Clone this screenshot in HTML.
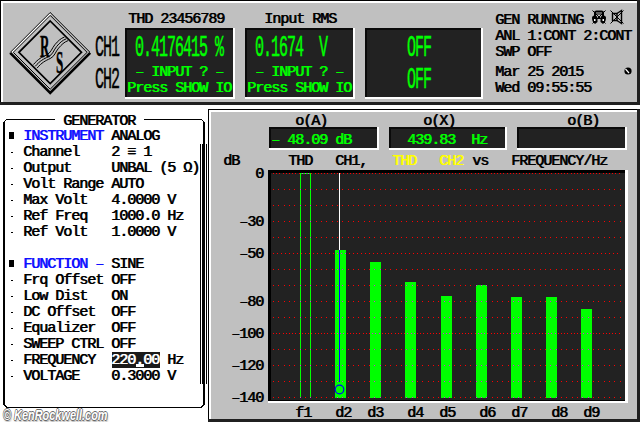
<!DOCTYPE html>
<html><head><meta charset="utf-8"><style>
html,body{margin:0;padding:0;background:#fff;width:640px;height:422px;overflow:hidden;position:relative}
.r{position:absolute}
.t{position:absolute;white-space:pre;font:15px/16px "Liberation Mono",monospace;letter-spacing:-1px;text-shadow:0.8px 0 0 currentColor}
.big{position:absolute;white-space:pre;font:15px/16px "Liberation Mono",monospace;letter-spacing:-1px;transform:scaleY(2);transform-origin:0 0;-webkit-text-stroke:0.25px currentColor}
.logo{position:absolute;font:bold 31px/31px "Liberation Serif",serif;transform:scaleX(0.42);transform-origin:0 0;color:#000;-webkit-text-stroke:0.5px #000}
.wm{position:absolute;white-space:pre;font:italic bold 14px/16px "Liberation Sans",sans-serif;color:#fff;transform:scaleX(0.78);transform-origin:0 0;text-shadow:-0.8px 0 0.6px #666,0.8px 0 0.6px #666,0 -0.8px 0.6px #666,0 0.8px 0.6px #666,1px 2px 2px #999}
</style></head><body>
<div class="r" style="left:0px;top:0px;width:640px;height:105px;background:#000;"></div>
<div class="r" style="left:1px;top:1px;width:636px;height:101px;background:#fff;"></div>
<div class="r" style="left:3px;top:3px;width:634px;height:99px;background:#c0c0c0;"></div>
<div class="r" style="left:637px;top:0px;width:3px;height:105px;background:#202020;"></div>
<div class="r" style="left:0px;top:102px;width:640px;height:3px;background:#202020;"></div>
<div class="r" style="left:125px;top:28px;width:110px;height:71px;background:#fff;"></div>
<div class="r" style="left:125px;top:28px;width:108px;height:69px;background:#0a0a0a;"></div>
<div class="r" style="left:127px;top:30px;width:106px;height:67px;background:#222222;"></div>
<div class="r" style="left:245px;top:28px;width:110px;height:71px;background:#fff;"></div>
<div class="r" style="left:245px;top:28px;width:108px;height:69px;background:#0a0a0a;"></div>
<div class="r" style="left:247px;top:30px;width:106px;height:67px;background:#222222;"></div>
<div class="r" style="left:365px;top:28px;width:118px;height:71px;background:#fff;"></div>
<div class="r" style="left:365px;top:28px;width:116px;height:69px;background:#0a0a0a;"></div>
<div class="r" style="left:367px;top:30px;width:114px;height:67px;background:#222222;"></div>
<div class="t" style="left:128px;top:12px;color:#000;">THD 23456789</div>
<div class="t" style="left:264px;top:12px;color:#000;">Input RMS</div>
<div class="big" style="left:95px;top:34px;color:#000;">CH1</div>
<div class="big" style="left:95px;top:66px;color:#000;">CH2</div>
<div class="big" style="left:135px;top:34px;color:#00ff00;">0.4176415 %</div>
<div class="t" style="left:127px;top:65px;color:#00ff00;"> – INPUT ? –</div>
<div class="t" style="left:127px;top:81px;color:#00ff00;">Press SHOW IO</div>
<div class="big" style="left:255px;top:34px;color:#00ff00;">0.1674  V</div>
<div class="t" style="left:247px;top:65px;color:#00ff00;"> – INPUT ? –</div>
<div class="t" style="left:247px;top:81px;color:#00ff00;">Press SHOW IO</div>
<div class="big" style="left:407px;top:34px;color:#00ff00;">OFF</div>
<div class="big" style="left:407px;top:66px;color:#00ff00;">OFF</div>
<div class="t" style="left:495px;top:13px;color:#000;">GEN RUNNING</div>
<div class="t" style="left:495px;top:29px;color:#000;">ANL 1:CONT 2:CONT</div>
<div class="t" style="left:495px;top:45px;color:#000;">SWP OFF</div>
<div class="t" style="left:495px;top:65px;color:#000;">Mar 25 2015</div>
<div class="t" style="left:495px;top:81px;color:#000;">Wed 09:55:55</div>
<div class="r" style="left:6px;top:119px;width:49px;height:1px;background:#000;"></div>
<div class="r" style="left:144px;top:119px;width:58px;height:1px;background:#000;"></div>
<div class="r" style="left:5px;top:120px;width:1px;height:1px;background:#000;"></div>
<div class="r" style="left:4px;top:121px;width:1px;height:1px;background:#000;"></div>
<div class="r" style="left:202px;top:120px;width:1px;height:1px;background:#000;"></div>
<div class="r" style="left:203px;top:121px;width:1px;height:1px;background:#000;"></div>
<div class="r" style="left:3px;top:122px;width:2px;height:283px;background:#000;"></div>
<div class="r" style="left:203px;top:122px;width:2px;height:283px;background:#000;"></div>
<div class="r" style="left:4px;top:405px;width:2px;height:1px;background:#000;"></div>
<div class="r" style="left:5px;top:406px;width:2px;height:1px;background:#000;"></div>
<div class="r" style="left:6px;top:407px;width:196px;height:1px;background:#000;"></div>
<div class="r" style="left:202px;top:405px;width:2px;height:1px;background:#000;"></div>
<div class="r" style="left:201px;top:406px;width:2px;height:1px;background:#000;"></div>
<div class="t" style="left:63px;top:114px;color:#000;">GENERATOR</div>
<div class="r" style="left:9px;top:132px;width:5px;height:7px;background:#000;"></div>
<div class="t" style="left:23px;top:129px;color:#1010ff;">INSTRUMENT</div>
<div class="t" style="left:111px;top:129px;color:#000;">ANALOG</div>
<div class="r" style="left:11px;top:152px;width:2px;height:1px;background:#000;"></div>
<div class="t" style="left:23px;top:145px;color:#000;">Channel</div>
<div class="t" style="left:111px;top:145px;color:#000;">2 ≡ 1</div>
<div class="r" style="left:11px;top:168px;width:2px;height:1px;background:#000;"></div>
<div class="t" style="left:23px;top:161px;color:#000;">Output</div>
<div class="t" style="left:111px;top:161px;color:#000;">UNBAL (5 Ω)</div>
<div class="r" style="left:11px;top:184px;width:2px;height:1px;background:#000;"></div>
<div class="t" style="left:23px;top:177px;color:#000;">Volt Range</div>
<div class="t" style="left:111px;top:177px;color:#000;">AUTO</div>
<div class="r" style="left:11px;top:200px;width:2px;height:1px;background:#000;"></div>
<div class="t" style="left:23px;top:193px;color:#000;">Max Volt</div>
<div class="t" style="left:111px;top:193px;color:#000;">4.0000 V</div>
<div class="r" style="left:11px;top:216px;width:2px;height:1px;background:#000;"></div>
<div class="t" style="left:23px;top:209px;color:#000;">Ref Freq</div>
<div class="t" style="left:111px;top:209px;color:#000;">1000.0 Hz</div>
<div class="r" style="left:11px;top:232px;width:2px;height:1px;background:#000;"></div>
<div class="t" style="left:23px;top:225px;color:#000;">Ref Volt</div>
<div class="t" style="left:111px;top:225px;color:#000;">1.0000 V</div>
<div class="r" style="left:9px;top:260px;width:5px;height:7px;background:#000;"></div>
<div class="t" style="left:23px;top:257px;color:#1010ff;">FUNCTION –</div>
<div class="t" style="left:111px;top:257px;color:#000;">SINE</div>
<div class="r" style="left:11px;top:280px;width:2px;height:1px;background:#000;"></div>
<div class="t" style="left:23px;top:273px;color:#000;">Frq Offset</div>
<div class="t" style="left:111px;top:273px;color:#000;">OFF</div>
<div class="r" style="left:11px;top:296px;width:2px;height:1px;background:#000;"></div>
<div class="t" style="left:23px;top:289px;color:#000;">Low Dist</div>
<div class="t" style="left:111px;top:289px;color:#000;">ON</div>
<div class="r" style="left:11px;top:312px;width:2px;height:1px;background:#000;"></div>
<div class="t" style="left:23px;top:305px;color:#000;">DC Offset</div>
<div class="t" style="left:111px;top:305px;color:#000;">OFF</div>
<div class="r" style="left:11px;top:328px;width:2px;height:1px;background:#000;"></div>
<div class="t" style="left:23px;top:321px;color:#000;">Equalizer</div>
<div class="t" style="left:111px;top:321px;color:#000;">OFF</div>
<div class="r" style="left:11px;top:344px;width:2px;height:1px;background:#000;"></div>
<div class="t" style="left:23px;top:337px;color:#000;">SWEEP CTRL</div>
<div class="t" style="left:111px;top:337px;color:#000;">OFF</div>
<div class="r" style="left:11px;top:360px;width:2px;height:1px;background:#000;"></div>
<div class="t" style="left:23px;top:353px;color:#000;">FREQUENCY</div>
<div class="r" style="left:11px;top:376px;width:2px;height:1px;background:#000;"></div>
<div class="t" style="left:23px;top:369px;color:#000;">VOLTAGE</div>
<div class="t" style="left:111px;top:369px;color:#000;">0.3000 V</div>
<div class="r" style="left:112px;top:352px;width:48px;height:16px;background:#1a1a1a;"></div>
<div class="t" style="left:111px;top:353px;color:#fff;">220.00</div>
<div class="r" style="left:136px;top:364px;width:8px;height:3px;background:#fff;"></div>
<div class="t" style="left:167px;top:353px;color:#000;">Hz</div>
<div class="r" style="left:200px;top:144px;width:1px;height:240px;background:#000;"></div>
<div class="r" style="left:202px;top:144px;width:3px;height:240px;background:#000;"></div>
<div class="r" style="left:206px;top:144px;width:1px;height:240px;background:#000;"></div>
<div class="wm" style="left:3px;top:407px">© KenRockwell.com</div>
<div class="r" style="left:208px;top:109px;width:432px;height:313px;background:#000;"></div>
<div class="r" style="left:209px;top:110px;width:431px;height:312px;background:#fff;"></div>
<div class="r" style="left:211px;top:112px;width:426px;height:307px;background:#c0c0c0;"></div>
<div class="r" style="left:637px;top:109px;width:3px;height:313px;background:#202020;"></div>
<div class="r" style="left:208px;top:419px;width:432px;height:3px;background:#202020;"></div>
<div class="t" style="left:295px;top:114px;color:#000;">o(A)</div>
<div class="t" style="left:423px;top:114px;color:#000;">o(X)</div>
<div class="t" style="left:567px;top:114px;color:#000;">o(B)</div>
<div class="r" style="left:269px;top:127px;width:110px;height:23px;background:#fff;"></div>
<div class="r" style="left:269px;top:127px;width:108px;height:21px;background:#0a0a0a;"></div>
<div class="r" style="left:271px;top:129px;width:106px;height:19px;background:#222222;"></div>
<div class="r" style="left:389px;top:127px;width:118px;height:23px;background:#fff;"></div>
<div class="r" style="left:389px;top:127px;width:116px;height:21px;background:#0a0a0a;"></div>
<div class="r" style="left:391px;top:129px;width:114px;height:19px;background:#222222;"></div>
<div class="r" style="left:517px;top:127px;width:110px;height:23px;background:#fff;"></div>
<div class="r" style="left:517px;top:127px;width:108px;height:21px;background:#0a0a0a;"></div>
<div class="r" style="left:519px;top:129px;width:106px;height:19px;background:#222222;"></div>
<div class="t" style="left:271px;top:133px;color:#00ff00;">– 48.09 dB</div>
<div class="t" style="left:407px;top:133px;color:#00ff00;">439.83  Hz</div>
<div class="t" style="left:223px;top:154px;color:#000;">dB</div>
<div class="t" style="left:288px;top:154px;color:#000;">THD</div>
<div class="t" style="left:335px;top:154px;color:#000;">CH1,</div>
<div class="t" style="left:392px;top:154px;color:#ffff00;">THD</div>
<div class="t" style="left:439px;top:154px;color:#ffff00;">CH2</div>
<div class="t" style="left:472px;top:154px;color:#000;">vs</div>
<div class="t" style="left:511px;top:154px;color:#000;">FREQUENCY/Hz</div>
<div class="r" style="left:268px;top:170px;width:360px;height:233px;background:#fff;"></div>
<div class="r" style="left:268px;top:170px;width:357px;height:231px;background:#000;"></div>
<div class="r" style="left:271px;top:173px;width:354px;height:227px;background:#222222;"></div>
<svg class="r" style="left:0;top:0" width="640" height="422" shape-rendering="crispEdges">
<rect x="335" y="250" width="11" height="148" fill="#00ff00"/>
<rect x="370" y="262" width="11" height="136" fill="#00ff00"/>
<rect x="405" y="282" width="11" height="116" fill="#00ff00"/>
<rect x="441" y="296" width="11" height="102" fill="#00ff00"/>
<rect x="476" y="285" width="11" height="113" fill="#00ff00"/>
<rect x="511" y="297" width="11" height="101" fill="#00ff00"/>
<rect x="546" y="297" width="11" height="101" fill="#00ff00"/>
<rect x="581" y="309" width="11" height="89" fill="#00ff00"/>
<rect x="300" y="173" width="1" height="225" fill="#00ff00"/>
<rect x="310" y="173" width="1" height="225" fill="#00ff00"/>
<rect x="300" y="173" width="11" height="1" fill="#00ff00"/>
<rect x="273" y="173" width="1" height="1" fill="#ff0000"/>
<rect x="276" y="173" width="1" height="1" fill="#ff0000"/>
<rect x="279" y="173" width="1" height="1" fill="#ff0000"/>
<rect x="283" y="173" width="1" height="1" fill="#ff0000"/>
<rect x="286" y="173" width="1" height="1" fill="#ff0000"/>
<rect x="289" y="173" width="1" height="1" fill="#ff0000"/>
<rect x="292" y="173" width="1" height="1" fill="#ff0000"/>
<rect x="295" y="173" width="1" height="1" fill="#ff0000"/>
<rect x="299" y="173" width="1" height="1" fill="#ff0000"/>
<rect x="302" y="173" width="1" height="1" fill="#e020e0"/>
<rect x="305" y="173" width="1" height="1" fill="#e020e0"/>
<rect x="308" y="173" width="1" height="1" fill="#e020e0"/>
<rect x="311" y="173" width="1" height="1" fill="#ff0000"/>
<rect x="315" y="173" width="1" height="1" fill="#ff0000"/>
<rect x="318" y="173" width="1" height="1" fill="#ff0000"/>
<rect x="321" y="173" width="1" height="1" fill="#ff0000"/>
<rect x="324" y="173" width="1" height="1" fill="#ff0000"/>
<rect x="327" y="173" width="1" height="1" fill="#ff0000"/>
<rect x="331" y="173" width="1" height="1" fill="#ff0000"/>
<rect x="334" y="173" width="1" height="1" fill="#ff0000"/>
<rect x="337" y="173" width="1" height="1" fill="#ff0000"/>
<rect x="340" y="173" width="1" height="1" fill="#ff0000"/>
<rect x="343" y="173" width="1" height="1" fill="#ff0000"/>
<rect x="347" y="173" width="1" height="1" fill="#ff0000"/>
<rect x="350" y="173" width="1" height="1" fill="#ff0000"/>
<rect x="353" y="173" width="1" height="1" fill="#ff0000"/>
<rect x="356" y="173" width="1" height="1" fill="#ff0000"/>
<rect x="359" y="173" width="1" height="1" fill="#ff0000"/>
<rect x="363" y="173" width="1" height="1" fill="#ff0000"/>
<rect x="366" y="173" width="1" height="1" fill="#ff0000"/>
<rect x="369" y="173" width="1" height="1" fill="#ff0000"/>
<rect x="372" y="173" width="1" height="1" fill="#ff0000"/>
<rect x="375" y="173" width="1" height="1" fill="#ff0000"/>
<rect x="379" y="173" width="1" height="1" fill="#ff0000"/>
<rect x="382" y="173" width="1" height="1" fill="#ff0000"/>
<rect x="385" y="173" width="1" height="1" fill="#ff0000"/>
<rect x="388" y="173" width="1" height="1" fill="#ff0000"/>
<rect x="391" y="173" width="1" height="1" fill="#ff0000"/>
<rect x="395" y="173" width="1" height="1" fill="#ff0000"/>
<rect x="398" y="173" width="1" height="1" fill="#ff0000"/>
<rect x="401" y="173" width="1" height="1" fill="#ff0000"/>
<rect x="404" y="173" width="1" height="1" fill="#ff0000"/>
<rect x="407" y="173" width="1" height="1" fill="#ff0000"/>
<rect x="411" y="173" width="1" height="1" fill="#ff0000"/>
<rect x="414" y="173" width="1" height="1" fill="#ff0000"/>
<rect x="417" y="173" width="1" height="1" fill="#ff0000"/>
<rect x="420" y="173" width="1" height="1" fill="#ff0000"/>
<rect x="423" y="173" width="1" height="1" fill="#ff0000"/>
<rect x="427" y="173" width="1" height="1" fill="#ff0000"/>
<rect x="430" y="173" width="1" height="1" fill="#ff0000"/>
<rect x="433" y="173" width="1" height="1" fill="#ff0000"/>
<rect x="436" y="173" width="1" height="1" fill="#ff0000"/>
<rect x="439" y="173" width="1" height="1" fill="#ff0000"/>
<rect x="443" y="173" width="1" height="1" fill="#ff0000"/>
<rect x="446" y="173" width="1" height="1" fill="#ff0000"/>
<rect x="449" y="173" width="1" height="1" fill="#ff0000"/>
<rect x="452" y="173" width="1" height="1" fill="#ff0000"/>
<rect x="455" y="173" width="1" height="1" fill="#ff0000"/>
<rect x="459" y="173" width="1" height="1" fill="#ff0000"/>
<rect x="462" y="173" width="1" height="1" fill="#ff0000"/>
<rect x="465" y="173" width="1" height="1" fill="#ff0000"/>
<rect x="468" y="173" width="1" height="1" fill="#ff0000"/>
<rect x="471" y="173" width="1" height="1" fill="#ff0000"/>
<rect x="475" y="173" width="1" height="1" fill="#ff0000"/>
<rect x="478" y="173" width="1" height="1" fill="#ff0000"/>
<rect x="481" y="173" width="1" height="1" fill="#ff0000"/>
<rect x="484" y="173" width="1" height="1" fill="#ff0000"/>
<rect x="487" y="173" width="1" height="1" fill="#ff0000"/>
<rect x="491" y="173" width="1" height="1" fill="#ff0000"/>
<rect x="494" y="173" width="1" height="1" fill="#ff0000"/>
<rect x="497" y="173" width="1" height="1" fill="#ff0000"/>
<rect x="500" y="173" width="1" height="1" fill="#ff0000"/>
<rect x="503" y="173" width="1" height="1" fill="#ff0000"/>
<rect x="507" y="173" width="1" height="1" fill="#ff0000"/>
<rect x="510" y="173" width="1" height="1" fill="#ff0000"/>
<rect x="513" y="173" width="1" height="1" fill="#ff0000"/>
<rect x="516" y="173" width="1" height="1" fill="#ff0000"/>
<rect x="519" y="173" width="1" height="1" fill="#ff0000"/>
<rect x="523" y="173" width="1" height="1" fill="#ff0000"/>
<rect x="526" y="173" width="1" height="1" fill="#ff0000"/>
<rect x="529" y="173" width="1" height="1" fill="#ff0000"/>
<rect x="532" y="173" width="1" height="1" fill="#ff0000"/>
<rect x="535" y="173" width="1" height="1" fill="#ff0000"/>
<rect x="539" y="173" width="1" height="1" fill="#ff0000"/>
<rect x="542" y="173" width="1" height="1" fill="#ff0000"/>
<rect x="545" y="173" width="1" height="1" fill="#ff0000"/>
<rect x="548" y="173" width="1" height="1" fill="#ff0000"/>
<rect x="551" y="173" width="1" height="1" fill="#ff0000"/>
<rect x="555" y="173" width="1" height="1" fill="#ff0000"/>
<rect x="558" y="173" width="1" height="1" fill="#ff0000"/>
<rect x="561" y="173" width="1" height="1" fill="#ff0000"/>
<rect x="564" y="173" width="1" height="1" fill="#ff0000"/>
<rect x="567" y="173" width="1" height="1" fill="#ff0000"/>
<rect x="571" y="173" width="1" height="1" fill="#ff0000"/>
<rect x="574" y="173" width="1" height="1" fill="#ff0000"/>
<rect x="577" y="173" width="1" height="1" fill="#ff0000"/>
<rect x="580" y="173" width="1" height="1" fill="#ff0000"/>
<rect x="583" y="173" width="1" height="1" fill="#ff0000"/>
<rect x="587" y="173" width="1" height="1" fill="#ff0000"/>
<rect x="590" y="173" width="1" height="1" fill="#ff0000"/>
<rect x="593" y="173" width="1" height="1" fill="#ff0000"/>
<rect x="596" y="173" width="1" height="1" fill="#ff0000"/>
<rect x="599" y="173" width="1" height="1" fill="#ff0000"/>
<rect x="603" y="173" width="1" height="1" fill="#ff0000"/>
<rect x="606" y="173" width="1" height="1" fill="#ff0000"/>
<rect x="609" y="173" width="1" height="1" fill="#ff0000"/>
<rect x="612" y="173" width="1" height="1" fill="#ff0000"/>
<rect x="615" y="173" width="1" height="1" fill="#ff0000"/>
<rect x="619" y="173" width="1" height="1" fill="#ff0000"/>
<rect x="273" y="189" width="1" height="1" fill="#ff0000"/>
<rect x="278" y="189" width="1" height="1" fill="#ff0000"/>
<rect x="284" y="189" width="1" height="1" fill="#ff0000"/>
<rect x="289" y="189" width="1" height="1" fill="#ff0000"/>
<rect x="294" y="189" width="1" height="1" fill="#ff0000"/>
<rect x="300" y="189" width="1" height="1" fill="#e020e0"/>
<rect x="305" y="189" width="1" height="1" fill="#ff0000"/>
<rect x="310" y="189" width="1" height="1" fill="#e020e0"/>
<rect x="316" y="189" width="1" height="1" fill="#ff0000"/>
<rect x="321" y="189" width="1" height="1" fill="#ff0000"/>
<rect x="326" y="189" width="1" height="1" fill="#ff0000"/>
<rect x="332" y="189" width="1" height="1" fill="#ff0000"/>
<rect x="337" y="189" width="1" height="1" fill="#ff0000"/>
<rect x="342" y="189" width="1" height="1" fill="#ff0000"/>
<rect x="348" y="189" width="1" height="1" fill="#ff0000"/>
<rect x="353" y="189" width="1" height="1" fill="#ff0000"/>
<rect x="358" y="189" width="1" height="1" fill="#ff0000"/>
<rect x="364" y="189" width="1" height="1" fill="#ff0000"/>
<rect x="369" y="189" width="1" height="1" fill="#ff0000"/>
<rect x="374" y="189" width="1" height="1" fill="#ff0000"/>
<rect x="380" y="189" width="1" height="1" fill="#ff0000"/>
<rect x="385" y="189" width="1" height="1" fill="#ff0000"/>
<rect x="390" y="189" width="1" height="1" fill="#ff0000"/>
<rect x="396" y="189" width="1" height="1" fill="#ff0000"/>
<rect x="401" y="189" width="1" height="1" fill="#ff0000"/>
<rect x="406" y="189" width="1" height="1" fill="#ff0000"/>
<rect x="412" y="189" width="1" height="1" fill="#ff0000"/>
<rect x="417" y="189" width="1" height="1" fill="#ff0000"/>
<rect x="422" y="189" width="1" height="1" fill="#ff0000"/>
<rect x="428" y="189" width="1" height="1" fill="#ff0000"/>
<rect x="433" y="189" width="1" height="1" fill="#ff0000"/>
<rect x="438" y="189" width="1" height="1" fill="#ff0000"/>
<rect x="444" y="189" width="1" height="1" fill="#ff0000"/>
<rect x="449" y="189" width="1" height="1" fill="#ff0000"/>
<rect x="454" y="189" width="1" height="1" fill="#ff0000"/>
<rect x="460" y="189" width="1" height="1" fill="#ff0000"/>
<rect x="465" y="189" width="1" height="1" fill="#ff0000"/>
<rect x="470" y="189" width="1" height="1" fill="#ff0000"/>
<rect x="476" y="189" width="1" height="1" fill="#ff0000"/>
<rect x="481" y="189" width="1" height="1" fill="#ff0000"/>
<rect x="486" y="189" width="1" height="1" fill="#ff0000"/>
<rect x="492" y="189" width="1" height="1" fill="#ff0000"/>
<rect x="497" y="189" width="1" height="1" fill="#ff0000"/>
<rect x="502" y="189" width="1" height="1" fill="#ff0000"/>
<rect x="508" y="189" width="1" height="1" fill="#ff0000"/>
<rect x="513" y="189" width="1" height="1" fill="#ff0000"/>
<rect x="518" y="189" width="1" height="1" fill="#ff0000"/>
<rect x="524" y="189" width="1" height="1" fill="#ff0000"/>
<rect x="529" y="189" width="1" height="1" fill="#ff0000"/>
<rect x="534" y="189" width="1" height="1" fill="#ff0000"/>
<rect x="540" y="189" width="1" height="1" fill="#ff0000"/>
<rect x="545" y="189" width="1" height="1" fill="#ff0000"/>
<rect x="550" y="189" width="1" height="1" fill="#ff0000"/>
<rect x="556" y="189" width="1" height="1" fill="#ff0000"/>
<rect x="561" y="189" width="1" height="1" fill="#ff0000"/>
<rect x="566" y="189" width="1" height="1" fill="#ff0000"/>
<rect x="572" y="189" width="1" height="1" fill="#ff0000"/>
<rect x="577" y="189" width="1" height="1" fill="#ff0000"/>
<rect x="582" y="189" width="1" height="1" fill="#ff0000"/>
<rect x="588" y="189" width="1" height="1" fill="#ff0000"/>
<rect x="593" y="189" width="1" height="1" fill="#ff0000"/>
<rect x="598" y="189" width="1" height="1" fill="#ff0000"/>
<rect x="604" y="189" width="1" height="1" fill="#ff0000"/>
<rect x="609" y="189" width="1" height="1" fill="#ff0000"/>
<rect x="614" y="189" width="1" height="1" fill="#ff0000"/>
<rect x="620" y="189" width="1" height="1" fill="#ff0000"/>
<rect x="273" y="205" width="1" height="1" fill="#ff0000"/>
<rect x="278" y="205" width="1" height="1" fill="#ff0000"/>
<rect x="284" y="205" width="1" height="1" fill="#ff0000"/>
<rect x="289" y="205" width="1" height="1" fill="#ff0000"/>
<rect x="294" y="205" width="1" height="1" fill="#ff0000"/>
<rect x="300" y="205" width="1" height="1" fill="#e020e0"/>
<rect x="305" y="205" width="1" height="1" fill="#ff0000"/>
<rect x="310" y="205" width="1" height="1" fill="#e020e0"/>
<rect x="316" y="205" width="1" height="1" fill="#ff0000"/>
<rect x="321" y="205" width="1" height="1" fill="#ff0000"/>
<rect x="326" y="205" width="1" height="1" fill="#ff0000"/>
<rect x="332" y="205" width="1" height="1" fill="#ff0000"/>
<rect x="337" y="205" width="1" height="1" fill="#ff0000"/>
<rect x="342" y="205" width="1" height="1" fill="#ff0000"/>
<rect x="348" y="205" width="1" height="1" fill="#ff0000"/>
<rect x="353" y="205" width="1" height="1" fill="#ff0000"/>
<rect x="358" y="205" width="1" height="1" fill="#ff0000"/>
<rect x="364" y="205" width="1" height="1" fill="#ff0000"/>
<rect x="369" y="205" width="1" height="1" fill="#ff0000"/>
<rect x="374" y="205" width="1" height="1" fill="#ff0000"/>
<rect x="380" y="205" width="1" height="1" fill="#ff0000"/>
<rect x="385" y="205" width="1" height="1" fill="#ff0000"/>
<rect x="390" y="205" width="1" height="1" fill="#ff0000"/>
<rect x="396" y="205" width="1" height="1" fill="#ff0000"/>
<rect x="401" y="205" width="1" height="1" fill="#ff0000"/>
<rect x="406" y="205" width="1" height="1" fill="#ff0000"/>
<rect x="412" y="205" width="1" height="1" fill="#ff0000"/>
<rect x="417" y="205" width="1" height="1" fill="#ff0000"/>
<rect x="422" y="205" width="1" height="1" fill="#ff0000"/>
<rect x="428" y="205" width="1" height="1" fill="#ff0000"/>
<rect x="433" y="205" width="1" height="1" fill="#ff0000"/>
<rect x="438" y="205" width="1" height="1" fill="#ff0000"/>
<rect x="444" y="205" width="1" height="1" fill="#ff0000"/>
<rect x="449" y="205" width="1" height="1" fill="#ff0000"/>
<rect x="454" y="205" width="1" height="1" fill="#ff0000"/>
<rect x="460" y="205" width="1" height="1" fill="#ff0000"/>
<rect x="465" y="205" width="1" height="1" fill="#ff0000"/>
<rect x="470" y="205" width="1" height="1" fill="#ff0000"/>
<rect x="476" y="205" width="1" height="1" fill="#ff0000"/>
<rect x="481" y="205" width="1" height="1" fill="#ff0000"/>
<rect x="486" y="205" width="1" height="1" fill="#ff0000"/>
<rect x="492" y="205" width="1" height="1" fill="#ff0000"/>
<rect x="497" y="205" width="1" height="1" fill="#ff0000"/>
<rect x="502" y="205" width="1" height="1" fill="#ff0000"/>
<rect x="508" y="205" width="1" height="1" fill="#ff0000"/>
<rect x="513" y="205" width="1" height="1" fill="#ff0000"/>
<rect x="518" y="205" width="1" height="1" fill="#ff0000"/>
<rect x="524" y="205" width="1" height="1" fill="#ff0000"/>
<rect x="529" y="205" width="1" height="1" fill="#ff0000"/>
<rect x="534" y="205" width="1" height="1" fill="#ff0000"/>
<rect x="540" y="205" width="1" height="1" fill="#ff0000"/>
<rect x="545" y="205" width="1" height="1" fill="#ff0000"/>
<rect x="550" y="205" width="1" height="1" fill="#ff0000"/>
<rect x="556" y="205" width="1" height="1" fill="#ff0000"/>
<rect x="561" y="205" width="1" height="1" fill="#ff0000"/>
<rect x="566" y="205" width="1" height="1" fill="#ff0000"/>
<rect x="572" y="205" width="1" height="1" fill="#ff0000"/>
<rect x="577" y="205" width="1" height="1" fill="#ff0000"/>
<rect x="582" y="205" width="1" height="1" fill="#ff0000"/>
<rect x="588" y="205" width="1" height="1" fill="#ff0000"/>
<rect x="593" y="205" width="1" height="1" fill="#ff0000"/>
<rect x="598" y="205" width="1" height="1" fill="#ff0000"/>
<rect x="604" y="205" width="1" height="1" fill="#ff0000"/>
<rect x="609" y="205" width="1" height="1" fill="#ff0000"/>
<rect x="614" y="205" width="1" height="1" fill="#ff0000"/>
<rect x="620" y="205" width="1" height="1" fill="#ff0000"/>
<rect x="273" y="221" width="1" height="1" fill="#ff0000"/>
<rect x="278" y="221" width="1" height="1" fill="#ff0000"/>
<rect x="284" y="221" width="1" height="1" fill="#ff0000"/>
<rect x="289" y="221" width="1" height="1" fill="#ff0000"/>
<rect x="294" y="221" width="1" height="1" fill="#ff0000"/>
<rect x="300" y="221" width="1" height="1" fill="#e020e0"/>
<rect x="305" y="221" width="1" height="1" fill="#ff0000"/>
<rect x="310" y="221" width="1" height="1" fill="#e020e0"/>
<rect x="316" y="221" width="1" height="1" fill="#ff0000"/>
<rect x="321" y="221" width="1" height="1" fill="#ff0000"/>
<rect x="326" y="221" width="1" height="1" fill="#ff0000"/>
<rect x="332" y="221" width="1" height="1" fill="#ff0000"/>
<rect x="337" y="221" width="1" height="1" fill="#ff0000"/>
<rect x="342" y="221" width="1" height="1" fill="#ff0000"/>
<rect x="348" y="221" width="1" height="1" fill="#ff0000"/>
<rect x="353" y="221" width="1" height="1" fill="#ff0000"/>
<rect x="358" y="221" width="1" height="1" fill="#ff0000"/>
<rect x="364" y="221" width="1" height="1" fill="#ff0000"/>
<rect x="369" y="221" width="1" height="1" fill="#ff0000"/>
<rect x="374" y="221" width="1" height="1" fill="#ff0000"/>
<rect x="380" y="221" width="1" height="1" fill="#ff0000"/>
<rect x="385" y="221" width="1" height="1" fill="#ff0000"/>
<rect x="390" y="221" width="1" height="1" fill="#ff0000"/>
<rect x="396" y="221" width="1" height="1" fill="#ff0000"/>
<rect x="401" y="221" width="1" height="1" fill="#ff0000"/>
<rect x="406" y="221" width="1" height="1" fill="#ff0000"/>
<rect x="412" y="221" width="1" height="1" fill="#ff0000"/>
<rect x="417" y="221" width="1" height="1" fill="#ff0000"/>
<rect x="422" y="221" width="1" height="1" fill="#ff0000"/>
<rect x="428" y="221" width="1" height="1" fill="#ff0000"/>
<rect x="433" y="221" width="1" height="1" fill="#ff0000"/>
<rect x="438" y="221" width="1" height="1" fill="#ff0000"/>
<rect x="444" y="221" width="1" height="1" fill="#ff0000"/>
<rect x="449" y="221" width="1" height="1" fill="#ff0000"/>
<rect x="454" y="221" width="1" height="1" fill="#ff0000"/>
<rect x="460" y="221" width="1" height="1" fill="#ff0000"/>
<rect x="465" y="221" width="1" height="1" fill="#ff0000"/>
<rect x="470" y="221" width="1" height="1" fill="#ff0000"/>
<rect x="476" y="221" width="1" height="1" fill="#ff0000"/>
<rect x="481" y="221" width="1" height="1" fill="#ff0000"/>
<rect x="486" y="221" width="1" height="1" fill="#ff0000"/>
<rect x="492" y="221" width="1" height="1" fill="#ff0000"/>
<rect x="497" y="221" width="1" height="1" fill="#ff0000"/>
<rect x="502" y="221" width="1" height="1" fill="#ff0000"/>
<rect x="508" y="221" width="1" height="1" fill="#ff0000"/>
<rect x="513" y="221" width="1" height="1" fill="#ff0000"/>
<rect x="518" y="221" width="1" height="1" fill="#ff0000"/>
<rect x="524" y="221" width="1" height="1" fill="#ff0000"/>
<rect x="529" y="221" width="1" height="1" fill="#ff0000"/>
<rect x="534" y="221" width="1" height="1" fill="#ff0000"/>
<rect x="540" y="221" width="1" height="1" fill="#ff0000"/>
<rect x="545" y="221" width="1" height="1" fill="#ff0000"/>
<rect x="550" y="221" width="1" height="1" fill="#ff0000"/>
<rect x="556" y="221" width="1" height="1" fill="#ff0000"/>
<rect x="561" y="221" width="1" height="1" fill="#ff0000"/>
<rect x="566" y="221" width="1" height="1" fill="#ff0000"/>
<rect x="572" y="221" width="1" height="1" fill="#ff0000"/>
<rect x="577" y="221" width="1" height="1" fill="#ff0000"/>
<rect x="582" y="221" width="1" height="1" fill="#ff0000"/>
<rect x="588" y="221" width="1" height="1" fill="#ff0000"/>
<rect x="593" y="221" width="1" height="1" fill="#ff0000"/>
<rect x="598" y="221" width="1" height="1" fill="#ff0000"/>
<rect x="604" y="221" width="1" height="1" fill="#ff0000"/>
<rect x="609" y="221" width="1" height="1" fill="#ff0000"/>
<rect x="614" y="221" width="1" height="1" fill="#ff0000"/>
<rect x="620" y="221" width="1" height="1" fill="#ff0000"/>
<rect x="273" y="237" width="1" height="1" fill="#ff0000"/>
<rect x="278" y="237" width="1" height="1" fill="#ff0000"/>
<rect x="284" y="237" width="1" height="1" fill="#ff0000"/>
<rect x="289" y="237" width="1" height="1" fill="#ff0000"/>
<rect x="294" y="237" width="1" height="1" fill="#ff0000"/>
<rect x="300" y="237" width="1" height="1" fill="#e020e0"/>
<rect x="305" y="237" width="1" height="1" fill="#ff0000"/>
<rect x="310" y="237" width="1" height="1" fill="#e020e0"/>
<rect x="316" y="237" width="1" height="1" fill="#ff0000"/>
<rect x="321" y="237" width="1" height="1" fill="#ff0000"/>
<rect x="326" y="237" width="1" height="1" fill="#ff0000"/>
<rect x="332" y="237" width="1" height="1" fill="#ff0000"/>
<rect x="337" y="237" width="1" height="1" fill="#ff0000"/>
<rect x="342" y="237" width="1" height="1" fill="#ff0000"/>
<rect x="348" y="237" width="1" height="1" fill="#ff0000"/>
<rect x="353" y="237" width="1" height="1" fill="#ff0000"/>
<rect x="358" y="237" width="1" height="1" fill="#ff0000"/>
<rect x="364" y="237" width="1" height="1" fill="#ff0000"/>
<rect x="369" y="237" width="1" height="1" fill="#ff0000"/>
<rect x="374" y="237" width="1" height="1" fill="#ff0000"/>
<rect x="380" y="237" width="1" height="1" fill="#ff0000"/>
<rect x="385" y="237" width="1" height="1" fill="#ff0000"/>
<rect x="390" y="237" width="1" height="1" fill="#ff0000"/>
<rect x="396" y="237" width="1" height="1" fill="#ff0000"/>
<rect x="401" y="237" width="1" height="1" fill="#ff0000"/>
<rect x="406" y="237" width="1" height="1" fill="#ff0000"/>
<rect x="412" y="237" width="1" height="1" fill="#ff0000"/>
<rect x="417" y="237" width="1" height="1" fill="#ff0000"/>
<rect x="422" y="237" width="1" height="1" fill="#ff0000"/>
<rect x="428" y="237" width="1" height="1" fill="#ff0000"/>
<rect x="433" y="237" width="1" height="1" fill="#ff0000"/>
<rect x="438" y="237" width="1" height="1" fill="#ff0000"/>
<rect x="444" y="237" width="1" height="1" fill="#ff0000"/>
<rect x="449" y="237" width="1" height="1" fill="#ff0000"/>
<rect x="454" y="237" width="1" height="1" fill="#ff0000"/>
<rect x="460" y="237" width="1" height="1" fill="#ff0000"/>
<rect x="465" y="237" width="1" height="1" fill="#ff0000"/>
<rect x="470" y="237" width="1" height="1" fill="#ff0000"/>
<rect x="476" y="237" width="1" height="1" fill="#ff0000"/>
<rect x="481" y="237" width="1" height="1" fill="#ff0000"/>
<rect x="486" y="237" width="1" height="1" fill="#ff0000"/>
<rect x="492" y="237" width="1" height="1" fill="#ff0000"/>
<rect x="497" y="237" width="1" height="1" fill="#ff0000"/>
<rect x="502" y="237" width="1" height="1" fill="#ff0000"/>
<rect x="508" y="237" width="1" height="1" fill="#ff0000"/>
<rect x="513" y="237" width="1" height="1" fill="#ff0000"/>
<rect x="518" y="237" width="1" height="1" fill="#ff0000"/>
<rect x="524" y="237" width="1" height="1" fill="#ff0000"/>
<rect x="529" y="237" width="1" height="1" fill="#ff0000"/>
<rect x="534" y="237" width="1" height="1" fill="#ff0000"/>
<rect x="540" y="237" width="1" height="1" fill="#ff0000"/>
<rect x="545" y="237" width="1" height="1" fill="#ff0000"/>
<rect x="550" y="237" width="1" height="1" fill="#ff0000"/>
<rect x="556" y="237" width="1" height="1" fill="#ff0000"/>
<rect x="561" y="237" width="1" height="1" fill="#ff0000"/>
<rect x="566" y="237" width="1" height="1" fill="#ff0000"/>
<rect x="572" y="237" width="1" height="1" fill="#ff0000"/>
<rect x="577" y="237" width="1" height="1" fill="#ff0000"/>
<rect x="582" y="237" width="1" height="1" fill="#ff0000"/>
<rect x="588" y="237" width="1" height="1" fill="#ff0000"/>
<rect x="593" y="237" width="1" height="1" fill="#ff0000"/>
<rect x="598" y="237" width="1" height="1" fill="#ff0000"/>
<rect x="604" y="237" width="1" height="1" fill="#ff0000"/>
<rect x="609" y="237" width="1" height="1" fill="#ff0000"/>
<rect x="614" y="237" width="1" height="1" fill="#ff0000"/>
<rect x="620" y="237" width="1" height="1" fill="#ff0000"/>
<rect x="273" y="253" width="1" height="1" fill="#ff0000"/>
<rect x="277" y="253" width="1" height="1" fill="#ff0000"/>
<rect x="281" y="253" width="1" height="1" fill="#ff0000"/>
<rect x="285" y="253" width="1" height="1" fill="#ff0000"/>
<rect x="289" y="253" width="1" height="1" fill="#ff0000"/>
<rect x="293" y="253" width="1" height="1" fill="#ff0000"/>
<rect x="297" y="253" width="1" height="1" fill="#ff0000"/>
<rect x="301" y="253" width="1" height="1" fill="#ff0000"/>
<rect x="305" y="253" width="1" height="1" fill="#ff0000"/>
<rect x="309" y="253" width="1" height="1" fill="#ff0000"/>
<rect x="313" y="253" width="1" height="1" fill="#ff0000"/>
<rect x="317" y="253" width="1" height="1" fill="#ff0000"/>
<rect x="321" y="253" width="1" height="1" fill="#ff0000"/>
<rect x="325" y="253" width="1" height="1" fill="#ff0000"/>
<rect x="329" y="253" width="1" height="1" fill="#ff0000"/>
<rect x="333" y="253" width="1" height="1" fill="#ff0000"/>
<rect x="337" y="253" width="1" height="1" fill="#e020e0"/>
<rect x="341" y="253" width="1" height="1" fill="#e020e0"/>
<rect x="345" y="253" width="1" height="1" fill="#e020e0"/>
<rect x="349" y="253" width="1" height="1" fill="#ff0000"/>
<rect x="353" y="253" width="1" height="1" fill="#ff0000"/>
<rect x="357" y="253" width="1" height="1" fill="#ff0000"/>
<rect x="361" y="253" width="1" height="1" fill="#ff0000"/>
<rect x="365" y="253" width="1" height="1" fill="#ff0000"/>
<rect x="369" y="253" width="1" height="1" fill="#ff0000"/>
<rect x="373" y="253" width="1" height="1" fill="#ff0000"/>
<rect x="377" y="253" width="1" height="1" fill="#ff0000"/>
<rect x="381" y="253" width="1" height="1" fill="#ff0000"/>
<rect x="385" y="253" width="1" height="1" fill="#ff0000"/>
<rect x="389" y="253" width="1" height="1" fill="#ff0000"/>
<rect x="393" y="253" width="1" height="1" fill="#ff0000"/>
<rect x="397" y="253" width="1" height="1" fill="#ff0000"/>
<rect x="401" y="253" width="1" height="1" fill="#ff0000"/>
<rect x="405" y="253" width="1" height="1" fill="#ff0000"/>
<rect x="409" y="253" width="1" height="1" fill="#ff0000"/>
<rect x="413" y="253" width="1" height="1" fill="#ff0000"/>
<rect x="417" y="253" width="1" height="1" fill="#ff0000"/>
<rect x="421" y="253" width="1" height="1" fill="#ff0000"/>
<rect x="425" y="253" width="1" height="1" fill="#ff0000"/>
<rect x="429" y="253" width="1" height="1" fill="#ff0000"/>
<rect x="433" y="253" width="1" height="1" fill="#ff0000"/>
<rect x="437" y="253" width="1" height="1" fill="#ff0000"/>
<rect x="441" y="253" width="1" height="1" fill="#ff0000"/>
<rect x="445" y="253" width="1" height="1" fill="#ff0000"/>
<rect x="449" y="253" width="1" height="1" fill="#ff0000"/>
<rect x="453" y="253" width="1" height="1" fill="#ff0000"/>
<rect x="457" y="253" width="1" height="1" fill="#ff0000"/>
<rect x="461" y="253" width="1" height="1" fill="#ff0000"/>
<rect x="465" y="253" width="1" height="1" fill="#ff0000"/>
<rect x="469" y="253" width="1" height="1" fill="#ff0000"/>
<rect x="473" y="253" width="1" height="1" fill="#ff0000"/>
<rect x="477" y="253" width="1" height="1" fill="#ff0000"/>
<rect x="481" y="253" width="1" height="1" fill="#ff0000"/>
<rect x="485" y="253" width="1" height="1" fill="#ff0000"/>
<rect x="489" y="253" width="1" height="1" fill="#ff0000"/>
<rect x="493" y="253" width="1" height="1" fill="#ff0000"/>
<rect x="497" y="253" width="1" height="1" fill="#ff0000"/>
<rect x="501" y="253" width="1" height="1" fill="#ff0000"/>
<rect x="505" y="253" width="1" height="1" fill="#ff0000"/>
<rect x="509" y="253" width="1" height="1" fill="#ff0000"/>
<rect x="513" y="253" width="1" height="1" fill="#ff0000"/>
<rect x="517" y="253" width="1" height="1" fill="#ff0000"/>
<rect x="521" y="253" width="1" height="1" fill="#ff0000"/>
<rect x="525" y="253" width="1" height="1" fill="#ff0000"/>
<rect x="529" y="253" width="1" height="1" fill="#ff0000"/>
<rect x="533" y="253" width="1" height="1" fill="#ff0000"/>
<rect x="537" y="253" width="1" height="1" fill="#ff0000"/>
<rect x="541" y="253" width="1" height="1" fill="#ff0000"/>
<rect x="545" y="253" width="1" height="1" fill="#ff0000"/>
<rect x="549" y="253" width="1" height="1" fill="#ff0000"/>
<rect x="553" y="253" width="1" height="1" fill="#ff0000"/>
<rect x="557" y="253" width="1" height="1" fill="#ff0000"/>
<rect x="561" y="253" width="1" height="1" fill="#ff0000"/>
<rect x="565" y="253" width="1" height="1" fill="#ff0000"/>
<rect x="569" y="253" width="1" height="1" fill="#ff0000"/>
<rect x="573" y="253" width="1" height="1" fill="#ff0000"/>
<rect x="577" y="253" width="1" height="1" fill="#ff0000"/>
<rect x="581" y="253" width="1" height="1" fill="#ff0000"/>
<rect x="585" y="253" width="1" height="1" fill="#ff0000"/>
<rect x="589" y="253" width="1" height="1" fill="#ff0000"/>
<rect x="593" y="253" width="1" height="1" fill="#ff0000"/>
<rect x="597" y="253" width="1" height="1" fill="#ff0000"/>
<rect x="601" y="253" width="1" height="1" fill="#ff0000"/>
<rect x="605" y="253" width="1" height="1" fill="#ff0000"/>
<rect x="609" y="253" width="1" height="1" fill="#ff0000"/>
<rect x="613" y="253" width="1" height="1" fill="#ff0000"/>
<rect x="617" y="253" width="1" height="1" fill="#ff0000"/>
<rect x="273" y="269" width="1" height="1" fill="#ff0000"/>
<rect x="278" y="269" width="1" height="1" fill="#ff0000"/>
<rect x="284" y="269" width="1" height="1" fill="#ff0000"/>
<rect x="289" y="269" width="1" height="1" fill="#ff0000"/>
<rect x="294" y="269" width="1" height="1" fill="#ff0000"/>
<rect x="300" y="269" width="1" height="1" fill="#e020e0"/>
<rect x="305" y="269" width="1" height="1" fill="#ff0000"/>
<rect x="310" y="269" width="1" height="1" fill="#e020e0"/>
<rect x="316" y="269" width="1" height="1" fill="#ff0000"/>
<rect x="321" y="269" width="1" height="1" fill="#ff0000"/>
<rect x="326" y="269" width="1" height="1" fill="#ff0000"/>
<rect x="332" y="269" width="1" height="1" fill="#ff0000"/>
<rect x="337" y="269" width="1" height="1" fill="#e020e0"/>
<rect x="342" y="269" width="1" height="1" fill="#e020e0"/>
<rect x="348" y="269" width="1" height="1" fill="#ff0000"/>
<rect x="353" y="269" width="1" height="1" fill="#ff0000"/>
<rect x="358" y="269" width="1" height="1" fill="#ff0000"/>
<rect x="364" y="269" width="1" height="1" fill="#ff0000"/>
<rect x="369" y="269" width="1" height="1" fill="#ff0000"/>
<rect x="374" y="269" width="1" height="1" fill="#e020e0"/>
<rect x="380" y="269" width="1" height="1" fill="#e020e0"/>
<rect x="385" y="269" width="1" height="1" fill="#ff0000"/>
<rect x="390" y="269" width="1" height="1" fill="#ff0000"/>
<rect x="396" y="269" width="1" height="1" fill="#ff0000"/>
<rect x="401" y="269" width="1" height="1" fill="#ff0000"/>
<rect x="406" y="269" width="1" height="1" fill="#ff0000"/>
<rect x="412" y="269" width="1" height="1" fill="#ff0000"/>
<rect x="417" y="269" width="1" height="1" fill="#ff0000"/>
<rect x="422" y="269" width="1" height="1" fill="#ff0000"/>
<rect x="428" y="269" width="1" height="1" fill="#ff0000"/>
<rect x="433" y="269" width="1" height="1" fill="#ff0000"/>
<rect x="438" y="269" width="1" height="1" fill="#ff0000"/>
<rect x="444" y="269" width="1" height="1" fill="#ff0000"/>
<rect x="449" y="269" width="1" height="1" fill="#ff0000"/>
<rect x="454" y="269" width="1" height="1" fill="#ff0000"/>
<rect x="460" y="269" width="1" height="1" fill="#ff0000"/>
<rect x="465" y="269" width="1" height="1" fill="#ff0000"/>
<rect x="470" y="269" width="1" height="1" fill="#ff0000"/>
<rect x="476" y="269" width="1" height="1" fill="#ff0000"/>
<rect x="481" y="269" width="1" height="1" fill="#ff0000"/>
<rect x="486" y="269" width="1" height="1" fill="#ff0000"/>
<rect x="492" y="269" width="1" height="1" fill="#ff0000"/>
<rect x="497" y="269" width="1" height="1" fill="#ff0000"/>
<rect x="502" y="269" width="1" height="1" fill="#ff0000"/>
<rect x="508" y="269" width="1" height="1" fill="#ff0000"/>
<rect x="513" y="269" width="1" height="1" fill="#ff0000"/>
<rect x="518" y="269" width="1" height="1" fill="#ff0000"/>
<rect x="524" y="269" width="1" height="1" fill="#ff0000"/>
<rect x="529" y="269" width="1" height="1" fill="#ff0000"/>
<rect x="534" y="269" width="1" height="1" fill="#ff0000"/>
<rect x="540" y="269" width="1" height="1" fill="#ff0000"/>
<rect x="545" y="269" width="1" height="1" fill="#ff0000"/>
<rect x="550" y="269" width="1" height="1" fill="#ff0000"/>
<rect x="556" y="269" width="1" height="1" fill="#ff0000"/>
<rect x="561" y="269" width="1" height="1" fill="#ff0000"/>
<rect x="566" y="269" width="1" height="1" fill="#ff0000"/>
<rect x="572" y="269" width="1" height="1" fill="#ff0000"/>
<rect x="577" y="269" width="1" height="1" fill="#ff0000"/>
<rect x="582" y="269" width="1" height="1" fill="#ff0000"/>
<rect x="588" y="269" width="1" height="1" fill="#ff0000"/>
<rect x="593" y="269" width="1" height="1" fill="#ff0000"/>
<rect x="598" y="269" width="1" height="1" fill="#ff0000"/>
<rect x="604" y="269" width="1" height="1" fill="#ff0000"/>
<rect x="609" y="269" width="1" height="1" fill="#ff0000"/>
<rect x="614" y="269" width="1" height="1" fill="#ff0000"/>
<rect x="620" y="269" width="1" height="1" fill="#ff0000"/>
<rect x="273" y="285" width="1" height="1" fill="#ff0000"/>
<rect x="278" y="285" width="1" height="1" fill="#ff0000"/>
<rect x="284" y="285" width="1" height="1" fill="#ff0000"/>
<rect x="289" y="285" width="1" height="1" fill="#ff0000"/>
<rect x="294" y="285" width="1" height="1" fill="#ff0000"/>
<rect x="300" y="285" width="1" height="1" fill="#e020e0"/>
<rect x="305" y="285" width="1" height="1" fill="#ff0000"/>
<rect x="310" y="285" width="1" height="1" fill="#e020e0"/>
<rect x="316" y="285" width="1" height="1" fill="#ff0000"/>
<rect x="321" y="285" width="1" height="1" fill="#ff0000"/>
<rect x="326" y="285" width="1" height="1" fill="#ff0000"/>
<rect x="332" y="285" width="1" height="1" fill="#ff0000"/>
<rect x="337" y="285" width="1" height="1" fill="#e020e0"/>
<rect x="342" y="285" width="1" height="1" fill="#e020e0"/>
<rect x="348" y="285" width="1" height="1" fill="#ff0000"/>
<rect x="353" y="285" width="1" height="1" fill="#ff0000"/>
<rect x="358" y="285" width="1" height="1" fill="#ff0000"/>
<rect x="364" y="285" width="1" height="1" fill="#ff0000"/>
<rect x="369" y="285" width="1" height="1" fill="#ff0000"/>
<rect x="374" y="285" width="1" height="1" fill="#e020e0"/>
<rect x="380" y="285" width="1" height="1" fill="#e020e0"/>
<rect x="385" y="285" width="1" height="1" fill="#ff0000"/>
<rect x="390" y="285" width="1" height="1" fill="#ff0000"/>
<rect x="396" y="285" width="1" height="1" fill="#ff0000"/>
<rect x="401" y="285" width="1" height="1" fill="#ff0000"/>
<rect x="406" y="285" width="1" height="1" fill="#e020e0"/>
<rect x="412" y="285" width="1" height="1" fill="#e020e0"/>
<rect x="417" y="285" width="1" height="1" fill="#ff0000"/>
<rect x="422" y="285" width="1" height="1" fill="#ff0000"/>
<rect x="428" y="285" width="1" height="1" fill="#ff0000"/>
<rect x="433" y="285" width="1" height="1" fill="#ff0000"/>
<rect x="438" y="285" width="1" height="1" fill="#ff0000"/>
<rect x="444" y="285" width="1" height="1" fill="#ff0000"/>
<rect x="449" y="285" width="1" height="1" fill="#ff0000"/>
<rect x="454" y="285" width="1" height="1" fill="#ff0000"/>
<rect x="460" y="285" width="1" height="1" fill="#ff0000"/>
<rect x="465" y="285" width="1" height="1" fill="#ff0000"/>
<rect x="470" y="285" width="1" height="1" fill="#ff0000"/>
<rect x="476" y="285" width="1" height="1" fill="#e020e0"/>
<rect x="481" y="285" width="1" height="1" fill="#e020e0"/>
<rect x="486" y="285" width="1" height="1" fill="#e020e0"/>
<rect x="492" y="285" width="1" height="1" fill="#ff0000"/>
<rect x="497" y="285" width="1" height="1" fill="#ff0000"/>
<rect x="502" y="285" width="1" height="1" fill="#ff0000"/>
<rect x="508" y="285" width="1" height="1" fill="#ff0000"/>
<rect x="513" y="285" width="1" height="1" fill="#ff0000"/>
<rect x="518" y="285" width="1" height="1" fill="#ff0000"/>
<rect x="524" y="285" width="1" height="1" fill="#ff0000"/>
<rect x="529" y="285" width="1" height="1" fill="#ff0000"/>
<rect x="534" y="285" width="1" height="1" fill="#ff0000"/>
<rect x="540" y="285" width="1" height="1" fill="#ff0000"/>
<rect x="545" y="285" width="1" height="1" fill="#ff0000"/>
<rect x="550" y="285" width="1" height="1" fill="#ff0000"/>
<rect x="556" y="285" width="1" height="1" fill="#ff0000"/>
<rect x="561" y="285" width="1" height="1" fill="#ff0000"/>
<rect x="566" y="285" width="1" height="1" fill="#ff0000"/>
<rect x="572" y="285" width="1" height="1" fill="#ff0000"/>
<rect x="577" y="285" width="1" height="1" fill="#ff0000"/>
<rect x="582" y="285" width="1" height="1" fill="#ff0000"/>
<rect x="588" y="285" width="1" height="1" fill="#ff0000"/>
<rect x="593" y="285" width="1" height="1" fill="#ff0000"/>
<rect x="598" y="285" width="1" height="1" fill="#ff0000"/>
<rect x="604" y="285" width="1" height="1" fill="#ff0000"/>
<rect x="609" y="285" width="1" height="1" fill="#ff0000"/>
<rect x="614" y="285" width="1" height="1" fill="#ff0000"/>
<rect x="620" y="285" width="1" height="1" fill="#ff0000"/>
<rect x="273" y="301" width="1" height="1" fill="#ff0000"/>
<rect x="278" y="301" width="1" height="1" fill="#ff0000"/>
<rect x="284" y="301" width="1" height="1" fill="#ff0000"/>
<rect x="289" y="301" width="1" height="1" fill="#ff0000"/>
<rect x="294" y="301" width="1" height="1" fill="#ff0000"/>
<rect x="300" y="301" width="1" height="1" fill="#e020e0"/>
<rect x="305" y="301" width="1" height="1" fill="#ff0000"/>
<rect x="310" y="301" width="1" height="1" fill="#e020e0"/>
<rect x="316" y="301" width="1" height="1" fill="#ff0000"/>
<rect x="321" y="301" width="1" height="1" fill="#ff0000"/>
<rect x="326" y="301" width="1" height="1" fill="#ff0000"/>
<rect x="332" y="301" width="1" height="1" fill="#ff0000"/>
<rect x="337" y="301" width="1" height="1" fill="#e020e0"/>
<rect x="342" y="301" width="1" height="1" fill="#e020e0"/>
<rect x="348" y="301" width="1" height="1" fill="#ff0000"/>
<rect x="353" y="301" width="1" height="1" fill="#ff0000"/>
<rect x="358" y="301" width="1" height="1" fill="#ff0000"/>
<rect x="364" y="301" width="1" height="1" fill="#ff0000"/>
<rect x="369" y="301" width="1" height="1" fill="#ff0000"/>
<rect x="374" y="301" width="1" height="1" fill="#e020e0"/>
<rect x="380" y="301" width="1" height="1" fill="#e020e0"/>
<rect x="385" y="301" width="1" height="1" fill="#ff0000"/>
<rect x="390" y="301" width="1" height="1" fill="#ff0000"/>
<rect x="396" y="301" width="1" height="1" fill="#ff0000"/>
<rect x="401" y="301" width="1" height="1" fill="#ff0000"/>
<rect x="406" y="301" width="1" height="1" fill="#e020e0"/>
<rect x="412" y="301" width="1" height="1" fill="#e020e0"/>
<rect x="417" y="301" width="1" height="1" fill="#ff0000"/>
<rect x="422" y="301" width="1" height="1" fill="#ff0000"/>
<rect x="428" y="301" width="1" height="1" fill="#ff0000"/>
<rect x="433" y="301" width="1" height="1" fill="#ff0000"/>
<rect x="438" y="301" width="1" height="1" fill="#ff0000"/>
<rect x="444" y="301" width="1" height="1" fill="#e020e0"/>
<rect x="449" y="301" width="1" height="1" fill="#e020e0"/>
<rect x="454" y="301" width="1" height="1" fill="#ff0000"/>
<rect x="460" y="301" width="1" height="1" fill="#ff0000"/>
<rect x="465" y="301" width="1" height="1" fill="#ff0000"/>
<rect x="470" y="301" width="1" height="1" fill="#ff0000"/>
<rect x="476" y="301" width="1" height="1" fill="#e020e0"/>
<rect x="481" y="301" width="1" height="1" fill="#e020e0"/>
<rect x="486" y="301" width="1" height="1" fill="#e020e0"/>
<rect x="492" y="301" width="1" height="1" fill="#ff0000"/>
<rect x="497" y="301" width="1" height="1" fill="#ff0000"/>
<rect x="502" y="301" width="1" height="1" fill="#ff0000"/>
<rect x="508" y="301" width="1" height="1" fill="#ff0000"/>
<rect x="513" y="301" width="1" height="1" fill="#e020e0"/>
<rect x="518" y="301" width="1" height="1" fill="#e020e0"/>
<rect x="524" y="301" width="1" height="1" fill="#ff0000"/>
<rect x="529" y="301" width="1" height="1" fill="#ff0000"/>
<rect x="534" y="301" width="1" height="1" fill="#ff0000"/>
<rect x="540" y="301" width="1" height="1" fill="#ff0000"/>
<rect x="545" y="301" width="1" height="1" fill="#ff0000"/>
<rect x="550" y="301" width="1" height="1" fill="#e020e0"/>
<rect x="556" y="301" width="1" height="1" fill="#e020e0"/>
<rect x="561" y="301" width="1" height="1" fill="#ff0000"/>
<rect x="566" y="301" width="1" height="1" fill="#ff0000"/>
<rect x="572" y="301" width="1" height="1" fill="#ff0000"/>
<rect x="577" y="301" width="1" height="1" fill="#ff0000"/>
<rect x="582" y="301" width="1" height="1" fill="#ff0000"/>
<rect x="588" y="301" width="1" height="1" fill="#ff0000"/>
<rect x="593" y="301" width="1" height="1" fill="#ff0000"/>
<rect x="598" y="301" width="1" height="1" fill="#ff0000"/>
<rect x="604" y="301" width="1" height="1" fill="#ff0000"/>
<rect x="609" y="301" width="1" height="1" fill="#ff0000"/>
<rect x="614" y="301" width="1" height="1" fill="#ff0000"/>
<rect x="620" y="301" width="1" height="1" fill="#ff0000"/>
<rect x="273" y="317" width="1" height="1" fill="#ff0000"/>
<rect x="278" y="317" width="1" height="1" fill="#ff0000"/>
<rect x="284" y="317" width="1" height="1" fill="#ff0000"/>
<rect x="289" y="317" width="1" height="1" fill="#ff0000"/>
<rect x="294" y="317" width="1" height="1" fill="#ff0000"/>
<rect x="300" y="317" width="1" height="1" fill="#e020e0"/>
<rect x="305" y="317" width="1" height="1" fill="#ff0000"/>
<rect x="310" y="317" width="1" height="1" fill="#e020e0"/>
<rect x="316" y="317" width="1" height="1" fill="#ff0000"/>
<rect x="321" y="317" width="1" height="1" fill="#ff0000"/>
<rect x="326" y="317" width="1" height="1" fill="#ff0000"/>
<rect x="332" y="317" width="1" height="1" fill="#ff0000"/>
<rect x="337" y="317" width="1" height="1" fill="#e020e0"/>
<rect x="342" y="317" width="1" height="1" fill="#e020e0"/>
<rect x="348" y="317" width="1" height="1" fill="#ff0000"/>
<rect x="353" y="317" width="1" height="1" fill="#ff0000"/>
<rect x="358" y="317" width="1" height="1" fill="#ff0000"/>
<rect x="364" y="317" width="1" height="1" fill="#ff0000"/>
<rect x="369" y="317" width="1" height="1" fill="#ff0000"/>
<rect x="374" y="317" width="1" height="1" fill="#e020e0"/>
<rect x="380" y="317" width="1" height="1" fill="#e020e0"/>
<rect x="385" y="317" width="1" height="1" fill="#ff0000"/>
<rect x="390" y="317" width="1" height="1" fill="#ff0000"/>
<rect x="396" y="317" width="1" height="1" fill="#ff0000"/>
<rect x="401" y="317" width="1" height="1" fill="#ff0000"/>
<rect x="406" y="317" width="1" height="1" fill="#e020e0"/>
<rect x="412" y="317" width="1" height="1" fill="#e020e0"/>
<rect x="417" y="317" width="1" height="1" fill="#ff0000"/>
<rect x="422" y="317" width="1" height="1" fill="#ff0000"/>
<rect x="428" y="317" width="1" height="1" fill="#ff0000"/>
<rect x="433" y="317" width="1" height="1" fill="#ff0000"/>
<rect x="438" y="317" width="1" height="1" fill="#ff0000"/>
<rect x="444" y="317" width="1" height="1" fill="#e020e0"/>
<rect x="449" y="317" width="1" height="1" fill="#e020e0"/>
<rect x="454" y="317" width="1" height="1" fill="#ff0000"/>
<rect x="460" y="317" width="1" height="1" fill="#ff0000"/>
<rect x="465" y="317" width="1" height="1" fill="#ff0000"/>
<rect x="470" y="317" width="1" height="1" fill="#ff0000"/>
<rect x="476" y="317" width="1" height="1" fill="#e020e0"/>
<rect x="481" y="317" width="1" height="1" fill="#e020e0"/>
<rect x="486" y="317" width="1" height="1" fill="#e020e0"/>
<rect x="492" y="317" width="1" height="1" fill="#ff0000"/>
<rect x="497" y="317" width="1" height="1" fill="#ff0000"/>
<rect x="502" y="317" width="1" height="1" fill="#ff0000"/>
<rect x="508" y="317" width="1" height="1" fill="#ff0000"/>
<rect x="513" y="317" width="1" height="1" fill="#e020e0"/>
<rect x="518" y="317" width="1" height="1" fill="#e020e0"/>
<rect x="524" y="317" width="1" height="1" fill="#ff0000"/>
<rect x="529" y="317" width="1" height="1" fill="#ff0000"/>
<rect x="534" y="317" width="1" height="1" fill="#ff0000"/>
<rect x="540" y="317" width="1" height="1" fill="#ff0000"/>
<rect x="545" y="317" width="1" height="1" fill="#ff0000"/>
<rect x="550" y="317" width="1" height="1" fill="#e020e0"/>
<rect x="556" y="317" width="1" height="1" fill="#e020e0"/>
<rect x="561" y="317" width="1" height="1" fill="#ff0000"/>
<rect x="566" y="317" width="1" height="1" fill="#ff0000"/>
<rect x="572" y="317" width="1" height="1" fill="#ff0000"/>
<rect x="577" y="317" width="1" height="1" fill="#ff0000"/>
<rect x="582" y="317" width="1" height="1" fill="#e020e0"/>
<rect x="588" y="317" width="1" height="1" fill="#e020e0"/>
<rect x="593" y="317" width="1" height="1" fill="#ff0000"/>
<rect x="598" y="317" width="1" height="1" fill="#ff0000"/>
<rect x="604" y="317" width="1" height="1" fill="#ff0000"/>
<rect x="609" y="317" width="1" height="1" fill="#ff0000"/>
<rect x="614" y="317" width="1" height="1" fill="#ff0000"/>
<rect x="620" y="317" width="1" height="1" fill="#ff0000"/>
<rect x="273" y="333" width="1" height="1" fill="#ff0000"/>
<rect x="276" y="333" width="1" height="1" fill="#ff0000"/>
<rect x="279" y="333" width="1" height="1" fill="#ff0000"/>
<rect x="283" y="333" width="1" height="1" fill="#ff0000"/>
<rect x="286" y="333" width="1" height="1" fill="#ff0000"/>
<rect x="289" y="333" width="1" height="1" fill="#ff0000"/>
<rect x="292" y="333" width="1" height="1" fill="#ff0000"/>
<rect x="295" y="333" width="1" height="1" fill="#ff0000"/>
<rect x="299" y="333" width="1" height="1" fill="#ff0000"/>
<rect x="302" y="333" width="1" height="1" fill="#ff0000"/>
<rect x="305" y="333" width="1" height="1" fill="#ff0000"/>
<rect x="308" y="333" width="1" height="1" fill="#ff0000"/>
<rect x="311" y="333" width="1" height="1" fill="#ff0000"/>
<rect x="315" y="333" width="1" height="1" fill="#ff0000"/>
<rect x="318" y="333" width="1" height="1" fill="#ff0000"/>
<rect x="321" y="333" width="1" height="1" fill="#ff0000"/>
<rect x="324" y="333" width="1" height="1" fill="#ff0000"/>
<rect x="327" y="333" width="1" height="1" fill="#ff0000"/>
<rect x="331" y="333" width="1" height="1" fill="#ff0000"/>
<rect x="334" y="333" width="1" height="1" fill="#ff0000"/>
<rect x="337" y="333" width="1" height="1" fill="#e020e0"/>
<rect x="340" y="333" width="1" height="1" fill="#e020e0"/>
<rect x="343" y="333" width="1" height="1" fill="#e020e0"/>
<rect x="347" y="333" width="1" height="1" fill="#ff0000"/>
<rect x="350" y="333" width="1" height="1" fill="#ff0000"/>
<rect x="353" y="333" width="1" height="1" fill="#ff0000"/>
<rect x="356" y="333" width="1" height="1" fill="#ff0000"/>
<rect x="359" y="333" width="1" height="1" fill="#ff0000"/>
<rect x="363" y="333" width="1" height="1" fill="#ff0000"/>
<rect x="366" y="333" width="1" height="1" fill="#ff0000"/>
<rect x="369" y="333" width="1" height="1" fill="#ff0000"/>
<rect x="372" y="333" width="1" height="1" fill="#e020e0"/>
<rect x="375" y="333" width="1" height="1" fill="#e020e0"/>
<rect x="379" y="333" width="1" height="1" fill="#e020e0"/>
<rect x="382" y="333" width="1" height="1" fill="#ff0000"/>
<rect x="385" y="333" width="1" height="1" fill="#ff0000"/>
<rect x="388" y="333" width="1" height="1" fill="#ff0000"/>
<rect x="391" y="333" width="1" height="1" fill="#ff0000"/>
<rect x="395" y="333" width="1" height="1" fill="#ff0000"/>
<rect x="398" y="333" width="1" height="1" fill="#ff0000"/>
<rect x="401" y="333" width="1" height="1" fill="#ff0000"/>
<rect x="404" y="333" width="1" height="1" fill="#ff0000"/>
<rect x="407" y="333" width="1" height="1" fill="#e020e0"/>
<rect x="411" y="333" width="1" height="1" fill="#e020e0"/>
<rect x="414" y="333" width="1" height="1" fill="#e020e0"/>
<rect x="417" y="333" width="1" height="1" fill="#ff0000"/>
<rect x="420" y="333" width="1" height="1" fill="#ff0000"/>
<rect x="423" y="333" width="1" height="1" fill="#ff0000"/>
<rect x="427" y="333" width="1" height="1" fill="#ff0000"/>
<rect x="430" y="333" width="1" height="1" fill="#ff0000"/>
<rect x="433" y="333" width="1" height="1" fill="#ff0000"/>
<rect x="436" y="333" width="1" height="1" fill="#ff0000"/>
<rect x="439" y="333" width="1" height="1" fill="#ff0000"/>
<rect x="443" y="333" width="1" height="1" fill="#e020e0"/>
<rect x="446" y="333" width="1" height="1" fill="#e020e0"/>
<rect x="449" y="333" width="1" height="1" fill="#e020e0"/>
<rect x="452" y="333" width="1" height="1" fill="#ff0000"/>
<rect x="455" y="333" width="1" height="1" fill="#ff0000"/>
<rect x="459" y="333" width="1" height="1" fill="#ff0000"/>
<rect x="462" y="333" width="1" height="1" fill="#ff0000"/>
<rect x="465" y="333" width="1" height="1" fill="#ff0000"/>
<rect x="468" y="333" width="1" height="1" fill="#ff0000"/>
<rect x="471" y="333" width="1" height="1" fill="#ff0000"/>
<rect x="475" y="333" width="1" height="1" fill="#ff0000"/>
<rect x="478" y="333" width="1" height="1" fill="#e020e0"/>
<rect x="481" y="333" width="1" height="1" fill="#e020e0"/>
<rect x="484" y="333" width="1" height="1" fill="#e020e0"/>
<rect x="487" y="333" width="1" height="1" fill="#ff0000"/>
<rect x="491" y="333" width="1" height="1" fill="#ff0000"/>
<rect x="494" y="333" width="1" height="1" fill="#ff0000"/>
<rect x="497" y="333" width="1" height="1" fill="#ff0000"/>
<rect x="500" y="333" width="1" height="1" fill="#ff0000"/>
<rect x="503" y="333" width="1" height="1" fill="#ff0000"/>
<rect x="507" y="333" width="1" height="1" fill="#ff0000"/>
<rect x="510" y="333" width="1" height="1" fill="#ff0000"/>
<rect x="513" y="333" width="1" height="1" fill="#e020e0"/>
<rect x="516" y="333" width="1" height="1" fill="#e020e0"/>
<rect x="519" y="333" width="1" height="1" fill="#e020e0"/>
<rect x="523" y="333" width="1" height="1" fill="#ff0000"/>
<rect x="526" y="333" width="1" height="1" fill="#ff0000"/>
<rect x="529" y="333" width="1" height="1" fill="#ff0000"/>
<rect x="532" y="333" width="1" height="1" fill="#ff0000"/>
<rect x="535" y="333" width="1" height="1" fill="#ff0000"/>
<rect x="539" y="333" width="1" height="1" fill="#ff0000"/>
<rect x="542" y="333" width="1" height="1" fill="#ff0000"/>
<rect x="545" y="333" width="1" height="1" fill="#ff0000"/>
<rect x="548" y="333" width="1" height="1" fill="#e020e0"/>
<rect x="551" y="333" width="1" height="1" fill="#e020e0"/>
<rect x="555" y="333" width="1" height="1" fill="#e020e0"/>
<rect x="558" y="333" width="1" height="1" fill="#ff0000"/>
<rect x="561" y="333" width="1" height="1" fill="#ff0000"/>
<rect x="564" y="333" width="1" height="1" fill="#ff0000"/>
<rect x="567" y="333" width="1" height="1" fill="#ff0000"/>
<rect x="571" y="333" width="1" height="1" fill="#ff0000"/>
<rect x="574" y="333" width="1" height="1" fill="#ff0000"/>
<rect x="577" y="333" width="1" height="1" fill="#ff0000"/>
<rect x="580" y="333" width="1" height="1" fill="#ff0000"/>
<rect x="583" y="333" width="1" height="1" fill="#e020e0"/>
<rect x="587" y="333" width="1" height="1" fill="#e020e0"/>
<rect x="590" y="333" width="1" height="1" fill="#e020e0"/>
<rect x="593" y="333" width="1" height="1" fill="#ff0000"/>
<rect x="596" y="333" width="1" height="1" fill="#ff0000"/>
<rect x="599" y="333" width="1" height="1" fill="#ff0000"/>
<rect x="603" y="333" width="1" height="1" fill="#ff0000"/>
<rect x="606" y="333" width="1" height="1" fill="#ff0000"/>
<rect x="609" y="333" width="1" height="1" fill="#ff0000"/>
<rect x="612" y="333" width="1" height="1" fill="#ff0000"/>
<rect x="615" y="333" width="1" height="1" fill="#ff0000"/>
<rect x="619" y="333" width="1" height="1" fill="#ff0000"/>
<rect x="273" y="349" width="1" height="1" fill="#ff0000"/>
<rect x="278" y="349" width="1" height="1" fill="#ff0000"/>
<rect x="284" y="349" width="1" height="1" fill="#ff0000"/>
<rect x="289" y="349" width="1" height="1" fill="#ff0000"/>
<rect x="294" y="349" width="1" height="1" fill="#ff0000"/>
<rect x="300" y="349" width="1" height="1" fill="#e020e0"/>
<rect x="305" y="349" width="1" height="1" fill="#ff0000"/>
<rect x="310" y="349" width="1" height="1" fill="#e020e0"/>
<rect x="316" y="349" width="1" height="1" fill="#ff0000"/>
<rect x="321" y="349" width="1" height="1" fill="#ff0000"/>
<rect x="326" y="349" width="1" height="1" fill="#ff0000"/>
<rect x="332" y="349" width="1" height="1" fill="#ff0000"/>
<rect x="337" y="349" width="1" height="1" fill="#e020e0"/>
<rect x="342" y="349" width="1" height="1" fill="#e020e0"/>
<rect x="348" y="349" width="1" height="1" fill="#ff0000"/>
<rect x="353" y="349" width="1" height="1" fill="#ff0000"/>
<rect x="358" y="349" width="1" height="1" fill="#ff0000"/>
<rect x="364" y="349" width="1" height="1" fill="#ff0000"/>
<rect x="369" y="349" width="1" height="1" fill="#ff0000"/>
<rect x="374" y="349" width="1" height="1" fill="#e020e0"/>
<rect x="380" y="349" width="1" height="1" fill="#e020e0"/>
<rect x="385" y="349" width="1" height="1" fill="#ff0000"/>
<rect x="390" y="349" width="1" height="1" fill="#ff0000"/>
<rect x="396" y="349" width="1" height="1" fill="#ff0000"/>
<rect x="401" y="349" width="1" height="1" fill="#ff0000"/>
<rect x="406" y="349" width="1" height="1" fill="#e020e0"/>
<rect x="412" y="349" width="1" height="1" fill="#e020e0"/>
<rect x="417" y="349" width="1" height="1" fill="#ff0000"/>
<rect x="422" y="349" width="1" height="1" fill="#ff0000"/>
<rect x="428" y="349" width="1" height="1" fill="#ff0000"/>
<rect x="433" y="349" width="1" height="1" fill="#ff0000"/>
<rect x="438" y="349" width="1" height="1" fill="#ff0000"/>
<rect x="444" y="349" width="1" height="1" fill="#e020e0"/>
<rect x="449" y="349" width="1" height="1" fill="#e020e0"/>
<rect x="454" y="349" width="1" height="1" fill="#ff0000"/>
<rect x="460" y="349" width="1" height="1" fill="#ff0000"/>
<rect x="465" y="349" width="1" height="1" fill="#ff0000"/>
<rect x="470" y="349" width="1" height="1" fill="#ff0000"/>
<rect x="476" y="349" width="1" height="1" fill="#e020e0"/>
<rect x="481" y="349" width="1" height="1" fill="#e020e0"/>
<rect x="486" y="349" width="1" height="1" fill="#e020e0"/>
<rect x="492" y="349" width="1" height="1" fill="#ff0000"/>
<rect x="497" y="349" width="1" height="1" fill="#ff0000"/>
<rect x="502" y="349" width="1" height="1" fill="#ff0000"/>
<rect x="508" y="349" width="1" height="1" fill="#ff0000"/>
<rect x="513" y="349" width="1" height="1" fill="#e020e0"/>
<rect x="518" y="349" width="1" height="1" fill="#e020e0"/>
<rect x="524" y="349" width="1" height="1" fill="#ff0000"/>
<rect x="529" y="349" width="1" height="1" fill="#ff0000"/>
<rect x="534" y="349" width="1" height="1" fill="#ff0000"/>
<rect x="540" y="349" width="1" height="1" fill="#ff0000"/>
<rect x="545" y="349" width="1" height="1" fill="#ff0000"/>
<rect x="550" y="349" width="1" height="1" fill="#e020e0"/>
<rect x="556" y="349" width="1" height="1" fill="#e020e0"/>
<rect x="561" y="349" width="1" height="1" fill="#ff0000"/>
<rect x="566" y="349" width="1" height="1" fill="#ff0000"/>
<rect x="572" y="349" width="1" height="1" fill="#ff0000"/>
<rect x="577" y="349" width="1" height="1" fill="#ff0000"/>
<rect x="582" y="349" width="1" height="1" fill="#e020e0"/>
<rect x="588" y="349" width="1" height="1" fill="#e020e0"/>
<rect x="593" y="349" width="1" height="1" fill="#ff0000"/>
<rect x="598" y="349" width="1" height="1" fill="#ff0000"/>
<rect x="604" y="349" width="1" height="1" fill="#ff0000"/>
<rect x="609" y="349" width="1" height="1" fill="#ff0000"/>
<rect x="614" y="349" width="1" height="1" fill="#ff0000"/>
<rect x="620" y="349" width="1" height="1" fill="#ff0000"/>
<rect x="273" y="365" width="1" height="1" fill="#ff0000"/>
<rect x="278" y="365" width="1" height="1" fill="#ff0000"/>
<rect x="284" y="365" width="1" height="1" fill="#ff0000"/>
<rect x="289" y="365" width="1" height="1" fill="#ff0000"/>
<rect x="294" y="365" width="1" height="1" fill="#ff0000"/>
<rect x="300" y="365" width="1" height="1" fill="#e020e0"/>
<rect x="305" y="365" width="1" height="1" fill="#ff0000"/>
<rect x="310" y="365" width="1" height="1" fill="#e020e0"/>
<rect x="316" y="365" width="1" height="1" fill="#ff0000"/>
<rect x="321" y="365" width="1" height="1" fill="#ff0000"/>
<rect x="326" y="365" width="1" height="1" fill="#ff0000"/>
<rect x="332" y="365" width="1" height="1" fill="#ff0000"/>
<rect x="337" y="365" width="1" height="1" fill="#e020e0"/>
<rect x="342" y="365" width="1" height="1" fill="#e020e0"/>
<rect x="348" y="365" width="1" height="1" fill="#ff0000"/>
<rect x="353" y="365" width="1" height="1" fill="#ff0000"/>
<rect x="358" y="365" width="1" height="1" fill="#ff0000"/>
<rect x="364" y="365" width="1" height="1" fill="#ff0000"/>
<rect x="369" y="365" width="1" height="1" fill="#ff0000"/>
<rect x="374" y="365" width="1" height="1" fill="#e020e0"/>
<rect x="380" y="365" width="1" height="1" fill="#e020e0"/>
<rect x="385" y="365" width="1" height="1" fill="#ff0000"/>
<rect x="390" y="365" width="1" height="1" fill="#ff0000"/>
<rect x="396" y="365" width="1" height="1" fill="#ff0000"/>
<rect x="401" y="365" width="1" height="1" fill="#ff0000"/>
<rect x="406" y="365" width="1" height="1" fill="#e020e0"/>
<rect x="412" y="365" width="1" height="1" fill="#e020e0"/>
<rect x="417" y="365" width="1" height="1" fill="#ff0000"/>
<rect x="422" y="365" width="1" height="1" fill="#ff0000"/>
<rect x="428" y="365" width="1" height="1" fill="#ff0000"/>
<rect x="433" y="365" width="1" height="1" fill="#ff0000"/>
<rect x="438" y="365" width="1" height="1" fill="#ff0000"/>
<rect x="444" y="365" width="1" height="1" fill="#e020e0"/>
<rect x="449" y="365" width="1" height="1" fill="#e020e0"/>
<rect x="454" y="365" width="1" height="1" fill="#ff0000"/>
<rect x="460" y="365" width="1" height="1" fill="#ff0000"/>
<rect x="465" y="365" width="1" height="1" fill="#ff0000"/>
<rect x="470" y="365" width="1" height="1" fill="#ff0000"/>
<rect x="476" y="365" width="1" height="1" fill="#e020e0"/>
<rect x="481" y="365" width="1" height="1" fill="#e020e0"/>
<rect x="486" y="365" width="1" height="1" fill="#e020e0"/>
<rect x="492" y="365" width="1" height="1" fill="#ff0000"/>
<rect x="497" y="365" width="1" height="1" fill="#ff0000"/>
<rect x="502" y="365" width="1" height="1" fill="#ff0000"/>
<rect x="508" y="365" width="1" height="1" fill="#ff0000"/>
<rect x="513" y="365" width="1" height="1" fill="#e020e0"/>
<rect x="518" y="365" width="1" height="1" fill="#e020e0"/>
<rect x="524" y="365" width="1" height="1" fill="#ff0000"/>
<rect x="529" y="365" width="1" height="1" fill="#ff0000"/>
<rect x="534" y="365" width="1" height="1" fill="#ff0000"/>
<rect x="540" y="365" width="1" height="1" fill="#ff0000"/>
<rect x="545" y="365" width="1" height="1" fill="#ff0000"/>
<rect x="550" y="365" width="1" height="1" fill="#e020e0"/>
<rect x="556" y="365" width="1" height="1" fill="#e020e0"/>
<rect x="561" y="365" width="1" height="1" fill="#ff0000"/>
<rect x="566" y="365" width="1" height="1" fill="#ff0000"/>
<rect x="572" y="365" width="1" height="1" fill="#ff0000"/>
<rect x="577" y="365" width="1" height="1" fill="#ff0000"/>
<rect x="582" y="365" width="1" height="1" fill="#e020e0"/>
<rect x="588" y="365" width="1" height="1" fill="#e020e0"/>
<rect x="593" y="365" width="1" height="1" fill="#ff0000"/>
<rect x="598" y="365" width="1" height="1" fill="#ff0000"/>
<rect x="604" y="365" width="1" height="1" fill="#ff0000"/>
<rect x="609" y="365" width="1" height="1" fill="#ff0000"/>
<rect x="614" y="365" width="1" height="1" fill="#ff0000"/>
<rect x="620" y="365" width="1" height="1" fill="#ff0000"/>
<rect x="273" y="381" width="1" height="1" fill="#ff0000"/>
<rect x="278" y="381" width="1" height="1" fill="#ff0000"/>
<rect x="284" y="381" width="1" height="1" fill="#ff0000"/>
<rect x="289" y="381" width="1" height="1" fill="#ff0000"/>
<rect x="294" y="381" width="1" height="1" fill="#ff0000"/>
<rect x="300" y="381" width="1" height="1" fill="#e020e0"/>
<rect x="305" y="381" width="1" height="1" fill="#ff0000"/>
<rect x="310" y="381" width="1" height="1" fill="#e020e0"/>
<rect x="316" y="381" width="1" height="1" fill="#ff0000"/>
<rect x="321" y="381" width="1" height="1" fill="#ff0000"/>
<rect x="326" y="381" width="1" height="1" fill="#ff0000"/>
<rect x="332" y="381" width="1" height="1" fill="#ff0000"/>
<rect x="337" y="381" width="1" height="1" fill="#e020e0"/>
<rect x="342" y="381" width="1" height="1" fill="#e020e0"/>
<rect x="348" y="381" width="1" height="1" fill="#ff0000"/>
<rect x="353" y="381" width="1" height="1" fill="#ff0000"/>
<rect x="358" y="381" width="1" height="1" fill="#ff0000"/>
<rect x="364" y="381" width="1" height="1" fill="#ff0000"/>
<rect x="369" y="381" width="1" height="1" fill="#ff0000"/>
<rect x="374" y="381" width="1" height="1" fill="#e020e0"/>
<rect x="380" y="381" width="1" height="1" fill="#e020e0"/>
<rect x="385" y="381" width="1" height="1" fill="#ff0000"/>
<rect x="390" y="381" width="1" height="1" fill="#ff0000"/>
<rect x="396" y="381" width="1" height="1" fill="#ff0000"/>
<rect x="401" y="381" width="1" height="1" fill="#ff0000"/>
<rect x="406" y="381" width="1" height="1" fill="#e020e0"/>
<rect x="412" y="381" width="1" height="1" fill="#e020e0"/>
<rect x="417" y="381" width="1" height="1" fill="#ff0000"/>
<rect x="422" y="381" width="1" height="1" fill="#ff0000"/>
<rect x="428" y="381" width="1" height="1" fill="#ff0000"/>
<rect x="433" y="381" width="1" height="1" fill="#ff0000"/>
<rect x="438" y="381" width="1" height="1" fill="#ff0000"/>
<rect x="444" y="381" width="1" height="1" fill="#e020e0"/>
<rect x="449" y="381" width="1" height="1" fill="#e020e0"/>
<rect x="454" y="381" width="1" height="1" fill="#ff0000"/>
<rect x="460" y="381" width="1" height="1" fill="#ff0000"/>
<rect x="465" y="381" width="1" height="1" fill="#ff0000"/>
<rect x="470" y="381" width="1" height="1" fill="#ff0000"/>
<rect x="476" y="381" width="1" height="1" fill="#e020e0"/>
<rect x="481" y="381" width="1" height="1" fill="#e020e0"/>
<rect x="486" y="381" width="1" height="1" fill="#e020e0"/>
<rect x="492" y="381" width="1" height="1" fill="#ff0000"/>
<rect x="497" y="381" width="1" height="1" fill="#ff0000"/>
<rect x="502" y="381" width="1" height="1" fill="#ff0000"/>
<rect x="508" y="381" width="1" height="1" fill="#ff0000"/>
<rect x="513" y="381" width="1" height="1" fill="#e020e0"/>
<rect x="518" y="381" width="1" height="1" fill="#e020e0"/>
<rect x="524" y="381" width="1" height="1" fill="#ff0000"/>
<rect x="529" y="381" width="1" height="1" fill="#ff0000"/>
<rect x="534" y="381" width="1" height="1" fill="#ff0000"/>
<rect x="540" y="381" width="1" height="1" fill="#ff0000"/>
<rect x="545" y="381" width="1" height="1" fill="#ff0000"/>
<rect x="550" y="381" width="1" height="1" fill="#e020e0"/>
<rect x="556" y="381" width="1" height="1" fill="#e020e0"/>
<rect x="561" y="381" width="1" height="1" fill="#ff0000"/>
<rect x="566" y="381" width="1" height="1" fill="#ff0000"/>
<rect x="572" y="381" width="1" height="1" fill="#ff0000"/>
<rect x="577" y="381" width="1" height="1" fill="#ff0000"/>
<rect x="582" y="381" width="1" height="1" fill="#e020e0"/>
<rect x="588" y="381" width="1" height="1" fill="#e020e0"/>
<rect x="593" y="381" width="1" height="1" fill="#ff0000"/>
<rect x="598" y="381" width="1" height="1" fill="#ff0000"/>
<rect x="604" y="381" width="1" height="1" fill="#ff0000"/>
<rect x="609" y="381" width="1" height="1" fill="#ff0000"/>
<rect x="614" y="381" width="1" height="1" fill="#ff0000"/>
<rect x="620" y="381" width="1" height="1" fill="#ff0000"/>
<rect x="273" y="397" width="1" height="1" fill="#ff0000"/>
<rect x="278" y="397" width="1" height="1" fill="#ff0000"/>
<rect x="284" y="397" width="1" height="1" fill="#ff0000"/>
<rect x="289" y="397" width="1" height="1" fill="#ff0000"/>
<rect x="294" y="397" width="1" height="1" fill="#ff0000"/>
<rect x="300" y="397" width="1" height="1" fill="#e020e0"/>
<rect x="305" y="397" width="1" height="1" fill="#ff0000"/>
<rect x="310" y="397" width="1" height="1" fill="#e020e0"/>
<rect x="316" y="397" width="1" height="1" fill="#ff0000"/>
<rect x="321" y="397" width="1" height="1" fill="#ff0000"/>
<rect x="326" y="397" width="1" height="1" fill="#ff0000"/>
<rect x="332" y="397" width="1" height="1" fill="#ff0000"/>
<rect x="337" y="397" width="1" height="1" fill="#e020e0"/>
<rect x="342" y="397" width="1" height="1" fill="#e020e0"/>
<rect x="348" y="397" width="1" height="1" fill="#ff0000"/>
<rect x="353" y="397" width="1" height="1" fill="#ff0000"/>
<rect x="358" y="397" width="1" height="1" fill="#ff0000"/>
<rect x="364" y="397" width="1" height="1" fill="#ff0000"/>
<rect x="369" y="397" width="1" height="1" fill="#ff0000"/>
<rect x="374" y="397" width="1" height="1" fill="#e020e0"/>
<rect x="380" y="397" width="1" height="1" fill="#e020e0"/>
<rect x="385" y="397" width="1" height="1" fill="#ff0000"/>
<rect x="390" y="397" width="1" height="1" fill="#ff0000"/>
<rect x="396" y="397" width="1" height="1" fill="#ff0000"/>
<rect x="401" y="397" width="1" height="1" fill="#ff0000"/>
<rect x="406" y="397" width="1" height="1" fill="#e020e0"/>
<rect x="412" y="397" width="1" height="1" fill="#e020e0"/>
<rect x="417" y="397" width="1" height="1" fill="#ff0000"/>
<rect x="422" y="397" width="1" height="1" fill="#ff0000"/>
<rect x="428" y="397" width="1" height="1" fill="#ff0000"/>
<rect x="433" y="397" width="1" height="1" fill="#ff0000"/>
<rect x="438" y="397" width="1" height="1" fill="#ff0000"/>
<rect x="444" y="397" width="1" height="1" fill="#e020e0"/>
<rect x="449" y="397" width="1" height="1" fill="#e020e0"/>
<rect x="454" y="397" width="1" height="1" fill="#ff0000"/>
<rect x="460" y="397" width="1" height="1" fill="#ff0000"/>
<rect x="465" y="397" width="1" height="1" fill="#ff0000"/>
<rect x="470" y="397" width="1" height="1" fill="#ff0000"/>
<rect x="476" y="397" width="1" height="1" fill="#e020e0"/>
<rect x="481" y="397" width="1" height="1" fill="#e020e0"/>
<rect x="486" y="397" width="1" height="1" fill="#e020e0"/>
<rect x="492" y="397" width="1" height="1" fill="#ff0000"/>
<rect x="497" y="397" width="1" height="1" fill="#ff0000"/>
<rect x="502" y="397" width="1" height="1" fill="#ff0000"/>
<rect x="508" y="397" width="1" height="1" fill="#ff0000"/>
<rect x="513" y="397" width="1" height="1" fill="#e020e0"/>
<rect x="518" y="397" width="1" height="1" fill="#e020e0"/>
<rect x="524" y="397" width="1" height="1" fill="#ff0000"/>
<rect x="529" y="397" width="1" height="1" fill="#ff0000"/>
<rect x="534" y="397" width="1" height="1" fill="#ff0000"/>
<rect x="540" y="397" width="1" height="1" fill="#ff0000"/>
<rect x="545" y="397" width="1" height="1" fill="#ff0000"/>
<rect x="550" y="397" width="1" height="1" fill="#e020e0"/>
<rect x="556" y="397" width="1" height="1" fill="#e020e0"/>
<rect x="561" y="397" width="1" height="1" fill="#ff0000"/>
<rect x="566" y="397" width="1" height="1" fill="#ff0000"/>
<rect x="572" y="397" width="1" height="1" fill="#ff0000"/>
<rect x="577" y="397" width="1" height="1" fill="#ff0000"/>
<rect x="582" y="397" width="1" height="1" fill="#e020e0"/>
<rect x="588" y="397" width="1" height="1" fill="#e020e0"/>
<rect x="593" y="397" width="1" height="1" fill="#ff0000"/>
<rect x="598" y="397" width="1" height="1" fill="#ff0000"/>
<rect x="604" y="397" width="1" height="1" fill="#ff0000"/>
<rect x="609" y="397" width="1" height="1" fill="#ff0000"/>
<rect x="614" y="397" width="1" height="1" fill="#ff0000"/>
<rect x="620" y="397" width="1" height="1" fill="#ff0000"/>
<rect x="339" y="173" width="1" height="77" fill="#ffffff"/>
<rect x="339" y="250" width="1" height="132" fill="#0000ff"/>
<circle cx="339.5" cy="389.5" r="4.3" fill="none" stroke="#0000ff" stroke-width="1.2" shape-rendering="auto"/>
</svg>
<div class="t" style="left:255px;top:167px;color:#000;">0</div>
<div class="t" style="left:239px;top:215px;color:#000;">–30</div>
<div class="t" style="left:239px;top:247px;color:#000;">–50</div>
<div class="t" style="left:239px;top:295px;color:#000;">–80</div>
<div class="t" style="left:231px;top:327px;color:#000;">–100</div>
<div class="t" style="left:231px;top:359px;color:#000;">–120</div>
<div class="t" style="left:231px;top:391px;color:#000;">–140</div>
<div class="t" style="left:295px;top:406px;color:#000;">f1</div>
<div class="t" style="left:335px;top:406px;color:#000;">d2</div>
<div class="t" style="left:367px;top:406px;color:#000;">d3</div>
<div class="t" style="left:407px;top:406px;color:#000;">d4</div>
<div class="t" style="left:439px;top:406px;color:#000;">d5</div>
<div class="t" style="left:479px;top:406px;color:#000;">d6</div>
<div class="t" style="left:511px;top:406px;color:#000;">d7</div>
<div class="t" style="left:551px;top:406px;color:#000;">d8</div>
<div class="t" style="left:583px;top:406px;color:#000;">d9</div>
<svg class="r" style="left:0;top:0" width="100" height="100">
<g transform="translate(50.2 52.3)" fill="none">
<path d="M-38.4 0 L0 -38.4" stroke="#fff" stroke-width="2.1"/>
<path d="M-39.8 0 L0 -39.8 L39.8 0" stroke="#000" stroke-width="1"/>
<path d="M-40 0.5 L0 40.5 L40 0.5" stroke="#000" stroke-width="2.6"/>
<path d="M0 -36.9 L36.9 0 L0 36.9 L-36.9 0 Z" stroke="#000" stroke-width="1"/>
<path d="M0 -31.3 L31.3 0 L0 31.3 L-31.3 0 Z" stroke="#000" stroke-width="1.7"/>
</g>
<g fill="none" stroke="#000" stroke-width="1">
<path d="M33.5 64.5 C38 59 42 57 46.5 55 C51 53 52 48 55 44.5 C58 41 60.5 38.5 64.5 37"/>
<path d="M35.3 66.3 C39.8 60.8 43.8 58.8 48.3 56.8 C52.8 54.8 53.8 49.8 56.8 46.3 C59.8 42.8 62.3 40.3 66.3 38.8"/>
<path d="M37.1 68.1 C41.6 62.6 45.6 60.6 50.1 58.6 C54.6 56.6 55.6 51.6 58.6 48.1 C61.6 44.6 64.1 42.1 68.1 40.6"/>
</g>
</svg>
<div class="logo" style="left:39.5px;top:30.7px">R</div>
<div class="logo" style="left:55.5px;top:46.5px">S</div>
<svg class="r" style="left:590px;top:8px" width="40" height="20">
<g stroke="#000" fill="none">
<path d="M2.5 2.5 L15.5 15.5 M15.5 2.5 L2.5 15.5" stroke-width="1"/>
<path d="M5 8 V4.5 Q5 3.5 6.5 3.5 H11.5 Q13 3.5 13 4.5 V8" stroke-width="2"/>
<path d="M6 6 H12" stroke-width="1"/>
</g>
<g fill="#000">
<path d="M2 10 Q2 7.5 4.5 7.5 Q7.5 7.5 7.5 10 V14 L5 16 L3 14 Q2 12 2 10 Z"/>
<path d="M16 10 Q16 7.5 13.5 7.5 Q10.5 7.5 10.5 10 V14 L13 16 L15 14 Q16 12 16 10 Z"/>
<rect x="8" y="9" width="2" height="2"/>
</g>
<g fill="#fff"><rect x="4" y="11" width="1.5" height="2"/><rect x="12.5" y="11" width="1.5" height="2"/></g>
<g stroke="#000" fill="none">
<path d="M20.5 2.5 L33.5 15.5 M33.5 2.5 L20.5 15.5" stroke-width="1"/>
<path d="M22.5 5.5 H27 V12.5 H22.5 Z" stroke-width="1.4"/>
<path d="M27 5.5 L31.5 2.5 V15.5 L27 12.5" stroke-width="1.4"/>
</g></svg>
<svg class="r" style="left:622px;top:65px" width="12" height="12">
<circle cx="6" cy="6" r="3.6" fill="#000"/><path d="M3.5 4 L7 8" stroke="#fff" stroke-width="1.2"/>
</svg>
</body></html>
